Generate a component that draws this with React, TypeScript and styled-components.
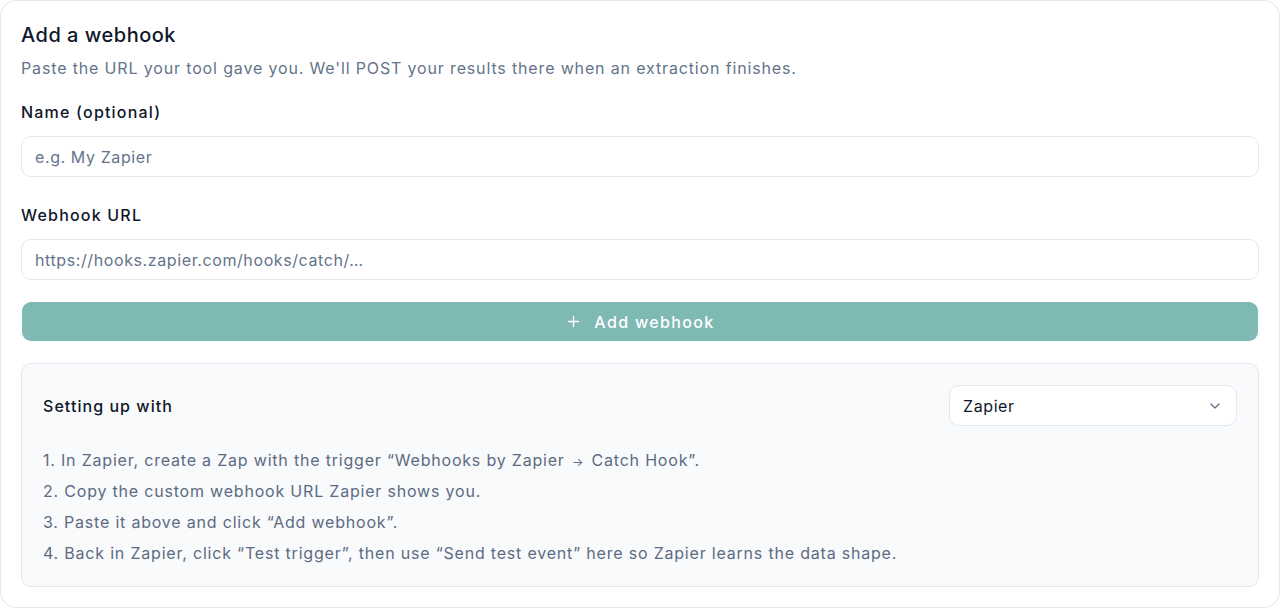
import React from 'react';
import styled, { createGlobalStyle } from 'styled-components';
import { Plus, ChevronDown } from 'lucide-react';

const GlobalStyle = createGlobalStyle`
  html, body {
    margin: 0;
    padding: 0;
    background: #ffffff;
  }
  body {
    font-family: Inter, "Noto Sans", sans-serif;
    -webkit-font-smoothing: antialiased;
  }
  * {
    box-sizing: border-box;
  }
`;

const Card = styled.div`
  width: 1280px;
  height: 608px;
  border: 1px solid #e5e7eb;
  border-radius: 16px;
  padding: 20px;
  background: #ffffff;
  display: flex;
  flex-direction: column;

  & > * {
    flex-shrink: 0;
  }
`;

const Title = styled.h2`
  margin: 0;
  font-size: 20px;
  line-height: 28px;
  font-weight: 500;
  color: #0f172a;
  letter-spacing: 0.5px;
`;

const Subtitle = styled.p`
  margin: 7px 0 0;
  font-size: 16px;
  line-height: 24px;
  color: #64748b;
  letter-spacing: 0.85px;
`;

const Field = styled.div<{ $top: number }>`
  display: flex;
  flex-direction: column;
  gap: 12px;
  margin-top: ${(p) => p.$top}px;
`;

const Label = styled.label`
  font-size: 16px;
  line-height: 24px;
  font-weight: 500;
  color: #0f172a;
  letter-spacing: 1.2px;
`;

const Input = styled.input`
  height: 41px;
  width: 100%;
  border: 1px solid #e2e8f0;
  border-radius: 10px;
  padding: 0 13px;
  font-family: inherit;
  font-size: 16px;
  letter-spacing: 0.6px;
  color: #0f172a;
  background: #ffffff;
  outline: none;

  &::placeholder {
    color: #64748b;
  }
`;

const SubmitButton = styled.button`
  margin: 22px 1px 0;
  height: 39px;
  border: none;
  border-radius: 9px;
  background: #7fb9b4;
  color: #ffffff;
  font-family: inherit;
  font-size: 16px;
  font-weight: 500;
  letter-spacing: 1.35px;
  display: flex;
  align-items: center;
  justify-content: center;
  gap: 12px;
  cursor: pointer;
`;

const Guide = styled.section`
  margin-top: 22px;
  flex: 1;
  border: 1px solid #e2e8f0;
  border-radius: 10px;
  background: #f8fafc;
  padding: 21px 21px 20px;
  display: flex;
  flex-direction: column;
`;

const GuideHeader = styled.div`
  display: flex;
  align-items: center;
  justify-content: space-between;
`;

const GuideTitle = styled.span`
  font-size: 16px;
  font-weight: 500;
  color: #0f172a;
  letter-spacing: 1.05px;
`;

const Select = styled.div`
  width: 288px;
  height: 41px;
  border: 1px solid #e2e8f0;
  border-radius: 10px;
  background: #ffffff;
  display: flex;
  align-items: center;
  justify-content: space-between;
  padding: 0 13px;
  font-size: 16px;
  color: #0f172a;
  letter-spacing: 0.6px;

  svg {
    color: #64748b;
  }
`;

const Steps = styled.ol`
  list-style: none;
  margin: 22px 0 0;
  padding: 0;
  display: flex;
  flex-direction: column;
  gap: 7px;
`;

const Step = styled.li`
  font-size: 16px;
  line-height: 24px;
  color: #5d6b82;
  letter-spacing: 0.8px;
`;

const Arrow = styled.span`
  font-size: 12px;
  line-height: 0;
  margin: 0 2px;
`;

const App: React.FC = () => {
  return (
    <>
      <GlobalStyle />
      <Card>
        <Title>Add a webhook</Title>
        <Subtitle>
          Paste the URL your tool gave you. We'll POST your results there when an extraction finishes.
        </Subtitle>

        <Field $top={20}>
          <Label>Name (optional)</Label>
          <Input placeholder="e.g. My Zapier" />
        </Field>

        <Field $top={26}>
          <Label>Webhook URL</Label>
          <Input placeholder={'https://hooks.zapier.com/hooks/catch/\u2026'} />
        </Field>

        <SubmitButton>
          <Plus size={17} strokeWidth={2} />
          Add webhook
        </SubmitButton>

        <Guide>
          <GuideHeader>
            <GuideTitle>Setting up with</GuideTitle>
            <Select>
              Zapier
              <ChevronDown size={16} />
            </Select>
          </GuideHeader>
          <Steps>
            <Step>
              1. In Zapier, create a Zap with the trigger {'\u201C'}Webhooks by Zapier <Arrow>{'\u2192'}</Arrow> Catch Hook{'\u201D'}.
            </Step>
            <Step>2. Copy the custom webhook URL Zapier shows you.</Step>
            <Step>3. Paste it above and click {'\u201C'}Add webhook{'\u201D'}.</Step>
            <Step>
              4. Back in Zapier, click {'\u201C'}Test trigger{'\u201D'}, then use {'\u201C'}Send test event{'\u201D'} here so Zapier learns the data shape.
            </Step>
          </Steps>
        </Guide>
      </Card>
    </>
  );
};

export default App;
